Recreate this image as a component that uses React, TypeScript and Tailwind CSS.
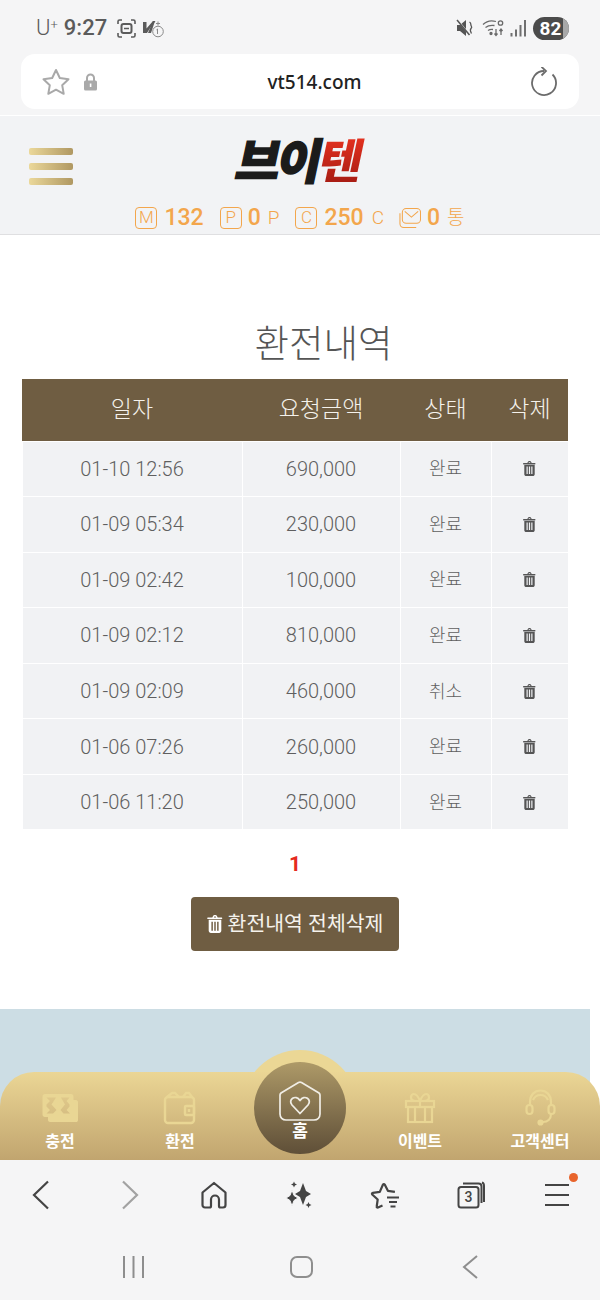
import React from "react";

const FONT = { fontFamily: 'Roboto, "Noto Sans CJK KR", sans-serif' };

const rows = [
  ["01-10 12:56", "690,000", "완료"],
  ["01-09 05:34", "230,000", "완료"],
  ["01-09 02:42", "100,000", "완료"],
  ["01-09 02:12", "810,000", "완료"],
  ["01-09 02:09", "460,000", "취소"],
  ["01-06 07:26", "260,000", "완료"],
  ["01-06 11:20", "250,000", "완료"],
];

function Trash({ className }: { className?: string }) {
  return (
    <svg viewBox="0 0 14 16" className={className} fill="currentColor">
      <path d="M4.6 2.2 5.4.7C5.6.3 6 0 6.5 0h1c.5 0 .9.3 1.1.7l.8 1.5h3.3c.4 0 .8.3.8.7s-.4.7-.8.7H.7C.3 3.6 0 3.300 0 2.900s.3-.7.7-.7h3.900ZM6 2.200h2l-.4-.8H6.400L6 2.200Z" />
      <path fillRule="evenodd" d="M1.400 4.300h11.200v9.800c0 1.100-.9 1.900-1.900 1.900H3.300c-1 0-1.900-.8-1.900-1.900V4.300Zm2.400 1.600v8h1.300v-8H3.800Zm2.550 0v8h1.300v-8h-1.300Zm2.550 0v8h1.300v-8H8.900Z" />
    </svg>
  );
}

function BoxLetter({ children }: { children: React.ReactNode }) {
  return (
    <span className="flex h-[22px] w-[22px] items-center justify-center rounded-[4px] border border-[#f3a64c] text-[17px] font-light leading-none text-[#f3a64c]">
      {children}
    </span>
  );
}

function StatusIcons() {
  return (
    <div className="flex items-center">
      <svg width="19" height="19" viewBox="0 0 19 19" fill="none" stroke="#5b5b5b" strokeWidth="1.600" className="ml-[10px]">
        <path d="M1 5V2.500C1 1.700 1.700 1 2.500 1H5M14 1h2.500c.8 0 1.500.7 1.500 1.500V5M18 14v2.500c0 .8-.7 1.500-1.500 1.500H14M5 18H2.500C1.700 18 1 17.300 1 16.500V14" />
        <rect x="4.500" y="5" width="10" height="9" rx="2" strokeWidth="2" />
        <path d="M7 9.500h5" strokeWidth="1.500" />
      </svg>
      <svg width="23" height="20" viewBox="0 0 23 20" className="ml-[6px]">
        <path d="M1 4h3.500v6.500L11 3h2.500L8.500 9.500 5 15H1V4Z" fill="#5b5b5b" />
        <path d="M13 3 9 15h-3l5-12h2Z" fill="#5b5b5b" />
        <circle cx="16" cy="13.500" r="5.300" fill="none" stroke="#8a8a8a" strokeWidth="1" />
        <path d="M15.500 11v5M14.500 11.800l1-.8" stroke="#8a8a8a" strokeWidth="1" fill="none" />
        <path d="M14 5.500h4M16 3.500v4" stroke="#8a8a8a" strokeWidth="1" />
      </svg>
    </div>
  );
}

function RightStatus() {
  return (
    <div className="flex items-center">
      <svg width="18" height="18" viewBox="0 0 18 18">
        <path d="M1 6h3l6-5v16l-6-5H1V6Z" fill="#555" />
        <path d="M2 1.500 13 15" stroke="#f5f5f5" strokeWidth="1.500" />
        <path d="M1 1 13.500 16" stroke="#555" strokeWidth="1.500" />
        <path d="M13.500 3c2 1 1 2.500 1.500 3.500s1.500 1.500 0 3-.5 3 .5 5" fill="none" stroke="#555" strokeWidth="1.300" />
      </svg>
      <svg width="24" height="20" viewBox="0 0 24 20" fill="none" stroke="#6a6a6a" strokeWidth="1.300" className="ml-[8px]">
        <path d="M1 6.500C4 3.500 9 2 14 3.500M3.500 9.500C6 7.500 9 7 12.500 7.500M6 12.500c1.500-1 3-1.300 5-1" />
        <circle cx="9" cy="15.500" r="1" fill="#6a6a6a" />
        <path d="M14 17V11M12.500 15.500 14 17.500l1.500-2M19 11.500V17M17.500 13l1.500-2 1.500 2" />
        <circle cx="18.500" cy="5" r="2.200" />
      </svg>
      <svg width="17" height="20" viewBox="0 0 17 20" fill="#707070" className="ml-[4px]">
        <rect x="0.500" y="15" width="2" height="3.500" />
        <rect x="5" y="11.500" width="2" height="7" />
        <rect x="9.500" y="7" width="2" height="11.500" />
        <rect x="14" y="2" width="2" height="16.500" />
      </svg>
      <div className="relative ml-[6px] flex h-[23px] w-[36px] items-center justify-center overflow-hidden rounded-full bg-[#4b4b4b] text-[19px] font-bold leading-none text-white">
        <div className="absolute inset-y-0 right-0 w-[6px] bg-[#a8a8a8]" />
        <span className="relative -ml-[1px]">82</span>
      </div>
    </div>
  );
}

function NavMoney() {
  return (
    <svg width="36" height="30" viewBox="0 0 36 30" fill="#e9d694">
      <path fillRule="evenodd" d="M3 1h26c1.500 0 2.500 1 2.500 2.500V7H34c1 0 2 1 2 2v18c0 1.500-1 2-2 2H8c-1 0-2-1-2-2v-3H3c-1.500 0-2.500-1-2.500-2.500v-18C.5 2 1.500 1 3 1Zm1.500 3.500L8 8 4.500 11.500v2L8 17l-3.500 3.500H11L14.500 17 9.500 11.500 14 4.500H4.500Zm23 0H19l4 7-4.500 5.500 3 3.500h6.500L24.500 17l3-3.500v-2L24.500 8l3-3.500Z" />
      <path d="M16.500 8l3.500 4.500-3.500 4.500-3.500-4.500L16.500 8Z" />
    </svg>
  );
}

function NavWallet() {
  return (
    <svg width="34" height="34" viewBox="0 0 34 34" fill="none" stroke="#e9d694" strokeWidth="2.400">
      <rect x="2" y="6" width="29" height="26" rx="3" />
      <path d="M4 6 9 2h3l4 4M20 6l3-4h3l3 4" />
      <rect x="22" y="15" width="9" height="9" rx="1" />
      <path d="M26 18v3" />
    </svg>
  );
}

function NavGift() {
  return (
    <svg width="32" height="32" viewBox="0 0 32 32" fill="none" stroke="#e9d694" strokeWidth="2.200">
      <rect x="2" y="9" width="28" height="6" />
      <rect x="4" y="15" width="24" height="15" />
      <path d="M11 15v15M21 15v15M16 9v6" />
      <path d="M16 9c-2-5-4-7-6-7s-3 1.500-3 3.500S9 9 12 9M16 9c2-5 4-7 6-7s3 1.500 3 3.500S23 9 20 9" />
    </svg>
  );
}

function NavHeadset() {
  return (
    <svg width="31" height="37" viewBox="0 0 31 37" fill="none" stroke="#e9d694" strokeWidth="2.200">
      <path d="M5 16V13C5 6 9.500 1.500 15.500 1.500S26 6 26 13v3" />
      <path d="M8 11c1.500-3.500 4-5 7.500-5s6 1.500 7.500 5" />
      <rect x="1.500" y="16" width="6" height="9" rx="3" />
      <rect x="23.500" y="16" width="6" height="9" rx="3" />
      <path d="M26 25c0 5-3.500 8-8 8" />
      <circle cx="15.500" cy="33.500" r="2" fill="#e9d694" />
    </svg>
  );
}

function NavItem({ icon, label }: { icon: React.ReactNode; label: string }) {
  return (
    <div className="flex w-[120px] flex-col items-center">
      <div className="flex h-[40px] items-center justify-center">{icon}</div>
      <span className="mt-[3px] text-[16px] font-bold leading-[22px] text-white">{label}</span>
    </div>
  );
}

export default function App() {
  return (
    <div className="flex h-[1300px] w-[600px] flex-col overflow-hidden bg-white" style={FONT}>
      {/* phone status + address */}
      <div className="h-[116px] shrink-0 border-b border-white bg-[#f5f5f6]">
        <div className="flex h-[54px] items-center justify-between pl-[36px] pr-[31px] pt-[2px] text-[#5b5b5b]">
          <div className="flex items-center">
            <span className="text-[22px] font-light leading-none">U<sup className="text-[13px]">+</sup></span>
            <span className="ml-[6px] text-[22px] font-medium leading-none">9:27</span>
            <StatusIcons />
          </div>
          <RightStatus />
        </div>
        <div className="mx-[21px] flex h-[55px] items-center justify-between rounded-[14px] bg-white pl-[20px] pr-[20px]">
          <div className="flex w-[169px] items-center">
            <svg width="30" height="28" viewBox="0 0 30 28" fill="none" stroke="#a9a9a9" strokeWidth="2" strokeLinejoin="round">
              <path d="M15 2l3.800 8 8.700 1.200-6.300 6 1.500 8.600L15 21.700l-7.700 4.100 1.500-8.600-6.300-6L11.200 10 15 2Z" />
            </svg>
            <svg width="15" height="18" viewBox="0 0 15 18" className="ml-[12px]">
              <path d="M4 8V5a3.500 3.500 0 0 1 7 0v3" fill="none" stroke="#a9a9a9" strokeWidth="2" />
              <rect x="1" y="7.500" width="13" height="10" rx="1.500" fill="#a9a9a9" />
              <rect x="6.800" y="10.500" width="1.600" height="3.500" fill="#fff" />
            </svg>
          </div>
          <span className="mt-[1px] text-[19px] font-medium leading-none text-[#222]" style={{ fontFamily: '"Noto Sans", Roboto, sans-serif' }}>vt514.com</span>
          <div className="flex w-[140px] justify-end">
            <svg width="28" height="30" viewBox="0 0 28 30" fill="none" stroke="#6b6b6b" strokeWidth="1.800">
              <path d="M13 4A12 12 0 1 0 21.500 7.500" />
              <path d="M10.500 -.2l4.500 4.200-4.500 4.500" />
            </svg>
          </div>
        </div>
      </div>

      {/* site header */}
      <header className="h-[119px] shrink-0 border-b border-[#dfdfe1] bg-[#f2f3f5]">
        <div className="grid h-[84px] grid-cols-[1fr_auto_1fr] items-center pl-[29px] pt-[16px]">
          <div className="flex w-[44px] flex-col gap-[8px]">
            <div className="h-[7px] rounded-[2px] bg-gradient-to-r from-[#ebd89a] to-[#b09862]" />
            <div className="h-[7px] rounded-[2px] bg-gradient-to-r from-[#ebd89a] to-[#b09862]" />
            <div className="h-[7px] rounded-[2px] bg-gradient-to-r from-[#ebd89a] to-[#b09862]" />
          </div>
          <div className="-ml-[29px] -mt-[17px] flex -skew-x-12 items-center text-[48px] font-black leading-none tracking-[-3px]" style={{ fontFamily: '"Noto Sans CJK KR", sans-serif' }}>
            <span className="text-[#1b1b1b] [-webkit-text-stroke:1.500px_#1b1b1b]">브이</span>
            <span className="bg-gradient-to-b from-[#e8321f] to-[#a91d14] bg-clip-text text-transparent">텐</span>
          </div>
          <div />
        </div>
        <div className="flex h-[34px] items-center justify-center pt-[1px] text-[#f3a64c]">
          <BoxLetter>M</BoxLetter>
          <span className="ml-[7px] text-[23px] font-medium leading-none">132</span>
          <span className="ml-[16px]"><BoxLetter>P</BoxLetter></span>
          <span className="ml-[6px] text-[23px] font-medium leading-none">0</span>
          <span className="ml-[7px] text-[19px] font-light leading-none">P</span>
          <span className="ml-[16px]"><BoxLetter>C</BoxLetter></span>
          <span className="ml-[7px] text-[23px] font-medium leading-none">250</span>
          <span className="ml-[8px] text-[19px] font-light leading-none">C</span>
          <svg width="22" height="22" viewBox="0 0 23 22" fill="none" stroke="#f3a64c" strokeWidth="1.100" className="ml-[15px]">
            <rect x="3.500" y="1" width="19" height="15.500" rx="4" />
            <path d="M6 4l7 6 7-6" />
            <path d="M1 6v11c0 2 1.500 4 4 4h13" />
          </svg>
          <span className="ml-[6px] text-[23px] font-medium leading-none">0</span>
          <span className="ml-[7px] text-[19px] font-light leading-none">통</span>
        </div>
      </header>

      {/* content */}
      <main className="flex h-[774px] w-[590px] shrink-0 flex-col items-center">
        <h1 className="ml-[57px] mt-[83px] h-[45px] text-[37.500px] font-light leading-[45px] text-[#555]" style={{ fontFamily: '"Noto Sans CJK KR", sans-serif' }}>환전내역</h1>
        <table className="mt-[16px] w-[546px] table-fixed border-collapse text-center">
          <colgroup>
            <col className="w-[220px]" />
            <col className="w-[158px]" />
            <col className="w-[91px]" />
            <col className="w-[77px]" />
          </colgroup>
          <thead>
            <tr className="h-[62px] bg-[#6f5d42] text-[23px] font-light text-[#f5f2ec]">
              <th className="font-light">일자</th>
              <th className="font-light">요청금액</th>
              <th className="font-light">상태</th>
              <th className="font-light">삭제</th>
            </tr>
          </thead>
          <tbody className="font-light text-[#5f5f5f]">
            {rows.map((r) => (
              <tr key={r[0] + r[1]} className="h-[55.570px] bg-[#f1f2f4]">
                <td className="border border-white text-[20px]">{r[0]}</td>
                <td className="border border-white text-[20px]">{r[1]}</td>
                <td className="border border-white text-[18px]">{r[2]}</td>
                <td className="border border-white">
                  <Trash className="mx-auto h-[15px] w-[13px] text-[#555]" />
                </td>
              </tr>
            ))}
          </tbody>
        </table>
        <div className="mt-[21px] h-[26px] text-[21px] font-bold leading-[26px] text-[#e52a1e]">1</div>
        <button className="mt-[20px] flex h-[54px] w-[208px] items-center justify-center gap-[5px] rounded-[4px] bg-[#6f5d42] text-[20.500px] text-[#f5f2ec]">
          <Trash className="h-[18px] w-[16px] text-white" />
          <span>환전내역 전체삭제</span>
        </button>
      </main>

      {/* banner + site nav */}
      <div className="relative h-[151px] shrink-0 overflow-hidden">
        <div className="h-full w-[590px] bg-[#ccdde4]" />
        <div className="absolute left-1/2 top-[41px] h-[116px] w-[116px] -translate-x-1/2 rounded-full bg-[#ebd795]" />
        <nav className="absolute inset-x-0 bottom-0 flex h-[88px] items-center justify-between rounded-t-[34px] bg-gradient-to-b from-[#ebd695] to-[#c1a56f] pt-[8px]">
          <NavItem icon={<NavMoney />} label="충전" />
          <NavItem icon={<NavWallet />} label="환전" />
          <div className="w-[120px]" />
          <NavItem icon={<NavGift />} label="이벤트" />
          <NavItem icon={<NavHeadset />} label="고객센터" />
        </nav>
        <div className="absolute left-[254px] top-[53px] flex h-[92px] w-[92px] flex-col items-center rounded-full bg-gradient-to-b from-[#ae9a68] to-[#5f4f38] pt-[19px]">
          <svg width="42" height="41" viewBox="0 0 42 41" fill="none" stroke="#f0ede5" strokeWidth="1.700" strokeLinejoin="round">
            <path d="M1 14c0-.8.400-1.500 1-2L19.500 1.500c1-.6 2-.6 3 0L40 12c.6.500 1 1.200 1 2v19c0 3.500-2.500 6-6 6H7c-3.500 0-6-2.500-6-6V14Z" />
            <path d="M21 32.500l-8-8.500c-4.500-5.500 3.500-11 8-4.500 4.500-6.500 12.500-1 8 4.500l-8 8.500Z" strokeWidth="1.800" />
          </svg>
          <span className="-mt-[1px] text-[17px] font-bold leading-[20px] text-white">홈</span>
        </div>
      </div>

      {/* browser toolbar */}
      <div className="flex h-[70px] shrink-0 items-center bg-[#f5f5f6]">
        <div className="-ml-[2px] flex w-[86px] justify-center">
          <svg width="28" height="30" viewBox="0 0 28 30" fill="none" stroke="#444" strokeWidth="2.200"><path d="M21 1.500 7 15l14 13.500" /></svg>
        </div>
        <div className="flex w-[86px] justify-center pl-[6px]">
          <svg width="28" height="30" viewBox="0 0 28 30" fill="none" stroke="#a2a2a2" strokeWidth="2.200"><path d="M7 1.500 21 15 7 28.500" /></svg>
        </div>
        <div className="flex w-[86px] justify-center pl-[2px]">
          <svg width="28" height="28" viewBox="0 0 28 28" fill="none" stroke="#444" strokeWidth="2.200" strokeLinejoin="round"><path d="M2.500 11.500 14 2l11.500 9.500V24c0 1.500-1 2.500-2.500 2.500h-2.500c-1 0-1.500-.5-1.500-1.500v-6.500a4 4 0 0 0-8 0V25c0 1-.5 1.500-1.500 1.500H5c-1.500 0-2.500-1-2.500-2.500V11.500Z" /></svg>
        </div>
        <div className="flex w-[86px] justify-center">
          <svg width="28" height="28" viewBox="0 0 28 28" fill="#444">
            <path d="M18 2l3 8 5 3-5 3-3 8-3-8-5-3 5-3 3-8Z" />
            <path d="M7 9l2 5.500L13 17l-4 2.500L7 25l-2-5.500L1 17l4-2.500L7 9Z" stroke="#f5f5f6" strokeWidth="1" />
            <path d="M9 .5l.9 2.100 2.100.9-2.100.9L9 6.500l-.9-2.100L6 3.500l2.100-.9L9 .5ZM23.500 21l.9 2.100 2.100.9-2.100.9-.9 2.100-.9-2.100-2.100-.9 2.100-.9.9-2.100Z" />
          </svg>
        </div>
        <div className="flex w-[86px] justify-center">
          <svg width="30" height="28" viewBox="0 0 30 28" fill="none" stroke="#444" strokeWidth="2.200" strokeLinejoin="round">
            <path d="M12.500 24.500 8 26.500c-.8.300-1.500-.3-1.300-1l1-7-5.500-5c-.6-.7-.2-1.500.6-1.600l7-1L13 3.500c.4-.7 1.300-.7 1.700 0l3.200 6.300 7 1" />
            <path d="M17 16.500h12M19 21h8M20.500 25.500h5" />
          </svg>
        </div>
        <div className="flex w-[86px] justify-center">
          <svg width="28" height="28" viewBox="0 0 28 28" fill="none" stroke="#444" strokeWidth="2">
            <rect x="1.500" y="6" width="20" height="20.500" rx="2.500" />
            <path d="M6 2.500h15.500c2 0 3 1 3 3V22" />
            <path d="M25 1.500C26.500 2 27 3 27 5v16" />
            <text x="11.500" y="21" textAnchor="middle" fontSize="14" fontWeight="500" fill="#444" stroke="none" fontFamily="Roboto, sans-serif">3</text>
          </svg>
        </div>
        <div className="flex w-[86px] justify-center">
          <div className="relative flex w-[24px] flex-col gap-[8px]">
            <div className="h-[2px] bg-[#444]" />
            <div className="h-[2px] bg-[#444]" />
            <div className="h-[2px] bg-[#444]" />
            <div className="absolute -right-[9px] -top-[11px] h-[9px] w-[9px] rounded-full bg-[#e8642c]" />
          </div>
        </div>
      </div>

      {/* android nav */}
      <div className="flex h-[70px] shrink-0 items-start bg-[#f5f5f6] pl-[122px] pt-[25px]">
        <svg width="23" height="24" viewBox="0 0 23 24" stroke="#8e8e8e" strokeWidth="2"><path d="M2 1v22M11.500 1v22M21 1v22" /></svg>
        <div className="ml-[145px] mt-[1px] h-[22px] w-[23px] rounded-[7px] border-2 border-[#8e8e8e]" />
        <svg width="16" height="24" viewBox="0 0 16 24" fill="none" stroke="#8e8e8e" strokeWidth="2" className="ml-[149px]"><path d="M15 1 2 12l13 11" /></svg>
      </div>
    </div>
  );
}
